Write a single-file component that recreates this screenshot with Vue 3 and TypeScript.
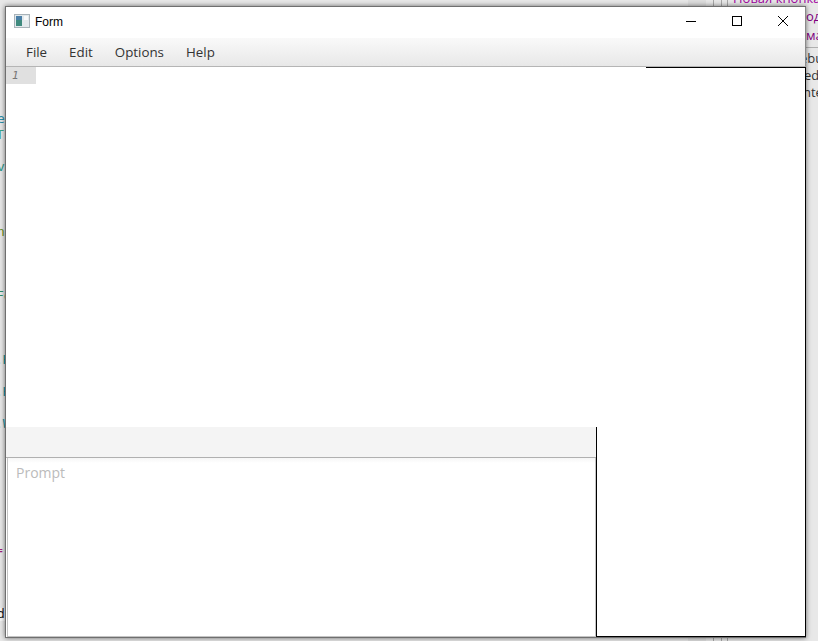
<script setup lang="ts">
interface Peek { text: string; top: number; color: string; left: number }

const menus: string[] = ['File', 'Edit', 'Options', 'Help']

const leftPeeks: Peek[] = [
  { text: 'e_', top: 111, color: '#2a8fa8', left: -3 },
  { text: 'Tr', top: 127, color: '#3fa58a', left: -4 },
  { text: 'v:', top: 159, color: '#2f9a8a', left: -3 },
  { text: 'nt', top: 224, color: '#6a8f1a', left: -3 },
  { text: 'Fo', top: 288, color: '#2f8f6a', left: -4 },
  { text: '.H', top: 352, color: '#14908f', left: -5 },
  { text: '.H', top: 384, color: '#14909f', left: -5 },
  { text: '.W', top: 416, color: '#14909f', left: -5 },
  { text: '=(', top: 542, color: '#a0207a', left: -5 },
  { text: 'df', top: 606, color: '#222222', left: -3 },
]

const rightPeeks: Peek[] = [
  { text: 'Новая кнопка кор', top: -10, color: '#a000a0', left: 733 },
  { text: 'од', top: 8, color: '#800080', left: 806 },
  { text: 'ма', top: 27, color: '#800080', left: 806 },
  { text: 'ebu', top: 50, color: '#333333', left: 800 },
  { text: 'ed', top: 67, color: '#333333', left: 804 },
  { text: 'nte', top: 84, color: '#333333', left: 803 },
]
</script>

<template>
  <div class="desktop">
    <div class="bg-patch"></div>
    <div class="bg-rule rule-a"></div>
    <div class="bg-rule rule-b"></div>
    <div class="bg-rule rule-c"></div>
    <div class="bg-hline"></div>
    <div class="bg-row"></div>
    <span
      v-for="p in leftPeeks"
      :key="p.top"
      class="peek peek-left"
      :style="{ top: p.top + 'px', left: p.left + 'px', color: p.color }"
    >{{ p.text }}</span>
    <span
      v-for="p in rightPeeks"
      :key="p.top"
      class="peek peek-right"
      :style="{ top: p.top + 'px', left: p.left + 'px', color: p.color }"
    >{{ p.text }}</span>

    <div class="window">
      <header class="titlebar">
        <svg class="app-icon" width="16" height="16" viewBox="0 0 16 16">
          <rect x="0.5" y="1.5" width="15" height="13" fill="#e3e9ec" stroke="#a9b3b9" />
          <rect x="2" y="3" width="6" height="10" fill="#3f8a7e" />
          <rect x="2" y="3" width="6" height="4" fill="#4a7fa8" />
          <rect x="10" y="3" width="4" height="4" fill="#f8fafa" />
        </svg>
        <span class="title">Form</span>
        <div class="controls">
          <div class="ctl">
            <svg width="10" height="10" viewBox="0 0 10 10"><path d="M0 5.5H10" stroke="#000" fill="none" /></svg>
          </div>
          <div class="ctl">
            <svg width="10" height="10" viewBox="0 0 10 10"><rect x="0.5" y="0.5" width="9" height="9" stroke="#000" fill="none" /></svg>
          </div>
          <div class="ctl">
            <svg width="10" height="10" viewBox="0 0 10 10"><path d="M0 0L10 10M10 0L0 10" stroke="#000" fill="none" stroke-width="1" /></svg>
          </div>
        </div>
      </header>

      <nav class="menubar">
        <span v-for="m in menus" :key="m" class="menu-item">{{ m }}</span>
      </nav>

      <main class="content">
        <div class="left-col">
          <div class="editor">
            <div class="gutter"><span class="line-no">1</span></div>
          </div>
          <div class="toolbar"></div>
          <div class="prompt"><span class="placeholder">Prompt</span></div>
        </div>
        <div class="right-col"></div>
      </main>
    </div>
  </div>
</template>

<style>
html, body { margin: 0; padding: 0; background: #e6e6e6; overflow: hidden; }
</style>

<style scoped>
.desktop {
  position: relative;
  width: 818px;
  height: 641px;
  overflow: hidden;
  background: #e8e8e8;
  font-family: "Open Sans", "Noto Sans", sans-serif;
}
.bg-patch {
  position: absolute;
  left: 688px;
  top: 0;
  bottom: 0;
  width: 18px;
  background: #dedede;
}
.bg-rule {
  position: absolute;
  top: 0;
  bottom: 0;
  width: 1px;
  background: #a8a8a8;
}
.rule-a { left: 713px; }
.rule-b { left: 721px; }
.rule-c { left: 727px; }
.bg-hline {
  position: absolute;
  left: 806px;
  right: 0;
  top: 47px;
  height: 1px;
  background: #b0b0b0;
}
.bg-row {
  position: absolute;
  left: 0;
  top: 608px;
  width: 5px;
  height: 13px;
  background: #f6f6f6;
}
.peek {
  position: absolute;
  white-space: nowrap;
}
.peek-left {
  font: 13px/16px "DejaVu Sans Mono", "Liberation Mono", monospace;
}
.peek-right {
  font: 13px/17px "Open Sans", "Noto Sans", sans-serif;
}
.window {
  position: absolute;
  left: 5px;
  top: 6px;
  width: 801px;
  height: 632px;
  box-sizing: border-box;
  display: flex;
  flex-direction: column;
  background: #fff;
  border: 1px solid #6f6f6f;
  border-right: 0;
  box-shadow: 0 0 5px rgba(0, 0, 0, 0.55);
}
.titlebar {
  height: 31px;
  flex: none;
  box-sizing: border-box;
  display: flex;
  align-items: center;
  background: #fff;
  padding: 0 0 3px 8px;
  border-right: 1px solid #8a8a8a;
}
.app-icon { flex: none; }
.title {
  margin-left: 5px;
  margin-top: 1px;
  font: 12px "Liberation Sans", Arial, sans-serif;
  color: #000;
}
.controls { margin-left: auto; margin-right: -1px; display: flex; }
.ctl {
  width: 46px;
  height: 28px;
  display: flex;
  align-items: center;
  justify-content: center;
}
.menubar {
  height: 29px;
  flex: none;
  box-sizing: border-box;
  display: flex;
  align-items: center;
  gap: 22px;
  padding-left: 20px;
  background: linear-gradient(#f9f9f9, #e8e8e8);
  border-bottom: 1px solid #b5b5b5;
  border-right: 1px solid #8a8a8a;
  font-size: 13.33px;
  color: #333;
}
.content { flex: 1; display: flex; min-height: 0; }
.left-col {
  width: 590px;
  flex: none;
  display: flex;
  flex-direction: column;
  background: #fff;
}
.editor { height: 360px; flex: none; }
.gutter {
  width: 30px;
  height: 17px;
  background: #e0e0e0;
  padding-left: 6px;
  box-sizing: border-box;
}
.line-no {
  font: italic 11px/17px "DejaVu Sans Mono", monospace;
  color: #777;
  display: block;
}
.toolbar {
  height: 31px;
  flex: none;
  box-sizing: border-box;
  background: #f4f4f4;
  border-bottom: 1px solid #b0b0b0;
}
.prompt {
  flex: 1;
  margin-left: 1px;
  padding: 3px 8px;
  border-left: 1px solid #c4c4c4;
  border-right: 1px solid #c4c4c4;
  border-bottom: 1px solid #c4c4c4;
  background: linear-gradient(#f6f6f6, #fff 5px);
}
.placeholder { font-size: 14px; color: #bbb; }
.right-col {
  flex: 1;
  position: relative;
  background: #fff;
  border-right: 1px solid #000;
  border-bottom: 1px solid #000;
}
.right-col::before {
  content: "";
  position: absolute;
  left: 50px;
  right: 0;
  top: 0;
  height: 1px;
  background: #000;
}
.right-col::after {
  content: "";
  position: absolute;
  left: 0;
  top: 360px;
  bottom: 0;
  width: 1px;
  background: #000;
}
</style>
